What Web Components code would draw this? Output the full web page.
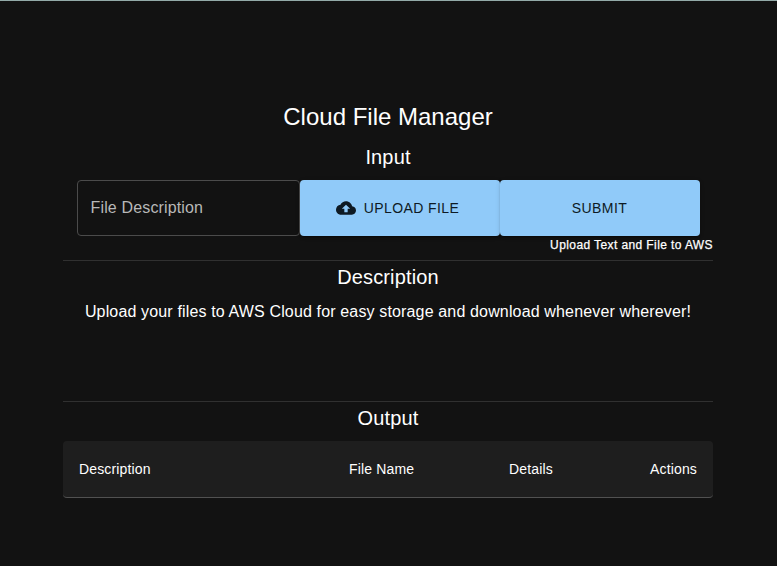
<!DOCTYPE html>
<html lang="en">
<head>
<meta charset="utf-8">
<title>Cloud File Manager</title>
<style>
html, body { margin: 0; height: 100%; }
body { background: #121212; color: #fff; font-family: "Liberation Sans", Arial, sans-serif; overflow: hidden; }
</style>
</head>
<body>
<cloud-app></cloud-app>
<script>
function define(name, html) {
  const template = document.createElement('template');
  template.innerHTML = html;
  customElements.define(name, class extends HTMLElement {
    constructor() {
      super();
      this.attachShadow({ mode: 'open' }).append(template.content.cloneNode(true));
    }
  });
}

define('section-title', `
<style>
:host { display: block; text-align: center; font-size: 20px; line-height: 32px; letter-spacing: 0.15px; }
:host([main]) { font-size: 24px; letter-spacing: 0; }
</style><slot></slot>`);

define('text-field', `
<style>
:host { display: flex; align-items: center; box-sizing: border-box; width: 223px; height: 56px; padding: 0 13px;
  border: 1px solid #4b4b4b; border-radius: 4px; color: #b8b8b8; font-size: 16px; letter-spacing: 0.15px; }
</style><slot></slot>`);

define('cloud-icon', `
<style>:host { display: block; width: 20px; height: 20px; } svg { display: block; }</style>
<svg width="20" height="20" viewBox="0 0 24 24" fill="currentColor"><path d="M19.35 10.04C18.67 6.59 15.64 4 12 4 9.11 4 6.6 5.64 5.35 8.04 2.34 8.36 0 10.91 0 14c0 3.31 2.69 6 6 6h13c2.76 0 5-2.24 5-5 0-2.64-2.05-4.78-4.65-4.96zM14 13v4h-4v-4H7l5-5 5 5h-3z"/></svg>`);

define('action-button', `
<style>
:host { display: block; width: 200px; height: 56px; }
button { display: flex; align-items: center; justify-content: center; gap: 8px; width: 100%; height: 100%; margin: 0;
  padding: 0 16px; border: 0; border-radius: 4px; background: #90caf9; color: #0e1a24;
  font: 14px/24px "Liberation Sans", Arial, sans-serif; letter-spacing: 0.4px; text-transform: uppercase;
  box-shadow: 0 3px 1px -2px rgba(0,0,0,.2), 0 2px 2px rgba(0,0,0,.14), 0 1px 5px rgba(0,0,0,.12); }
:host([icon]) button { padding: 0 17px 0 13px; }
</style>
<button type="button"><slot name="icon"></slot><span><slot></slot></span></button>`);

define('input-row', `
<style>:host { display: flex; justify-content: center; padding-top: 7px; }</style><slot></slot>`);

define('caption-text', `
<style>:host { display: block; text-align: right; font-size: 12px; line-height: 20px; letter-spacing: 0.4px; -webkit-text-stroke: 0.25px #fff; height: 25px; margin-top: -1px; }</style><slot></slot>`);

define('divider-line', `
<style>:host { display: block; height: 1px; background: #303030; }</style>`);

define('body-text', `
<style>:host { display: block; height: 108px; box-sizing: border-box; padding-top: 7px; text-align: center; font-size: 16px; line-height: 24px; letter-spacing: 0.15px; white-space: nowrap; }</style><slot></slot>`);

define('file-table', `
<style>
:host { display: block; margin-top: 7px; }
.head { display: grid; grid-template-columns: 270px 160px 1fr auto; align-items: center; box-sizing: border-box; height: 57px;
  padding: 0 16px; border-bottom: 1px solid #515151; border-radius: 4px; background: #1e1e1e; font-size: 14px; line-height: 24px; letter-spacing: 0.15px; }
</style>
<div class="head"><span>Description</span><span>File Name</span><span>Details</span><span>Actions</span></div>`);

define('cloud-app', `
<style>
:host { display: block; box-sizing: border-box; height: 100vh; border-top: 1px solid #93aaa8; padding-top: 100px; }
main { width: 650px; margin-left: 63px; }
.gap { margin-top: 8px; }
</style>
<main>
<section-title main>Cloud File Manager</section-title>
<section-title class="gap">Input</section-title>
<input-row>
<text-field>File Description</text-field>
<action-button icon><cloud-icon slot="icon"></cloud-icon>Upload File</action-button>
<action-button>Submit</action-button>
</input-row>
<caption-text>Upload Text and File to AWS</caption-text>
<divider-line></divider-line>
<section-title>Description</section-title>
<body-text>Upload your files to AWS Cloud for easy storage and download whenever wherever!</body-text>
<divider-line></divider-line>
<section-title>Output</section-title>
<file-table></file-table>
</main>`);
</script>
</body>
</html>
